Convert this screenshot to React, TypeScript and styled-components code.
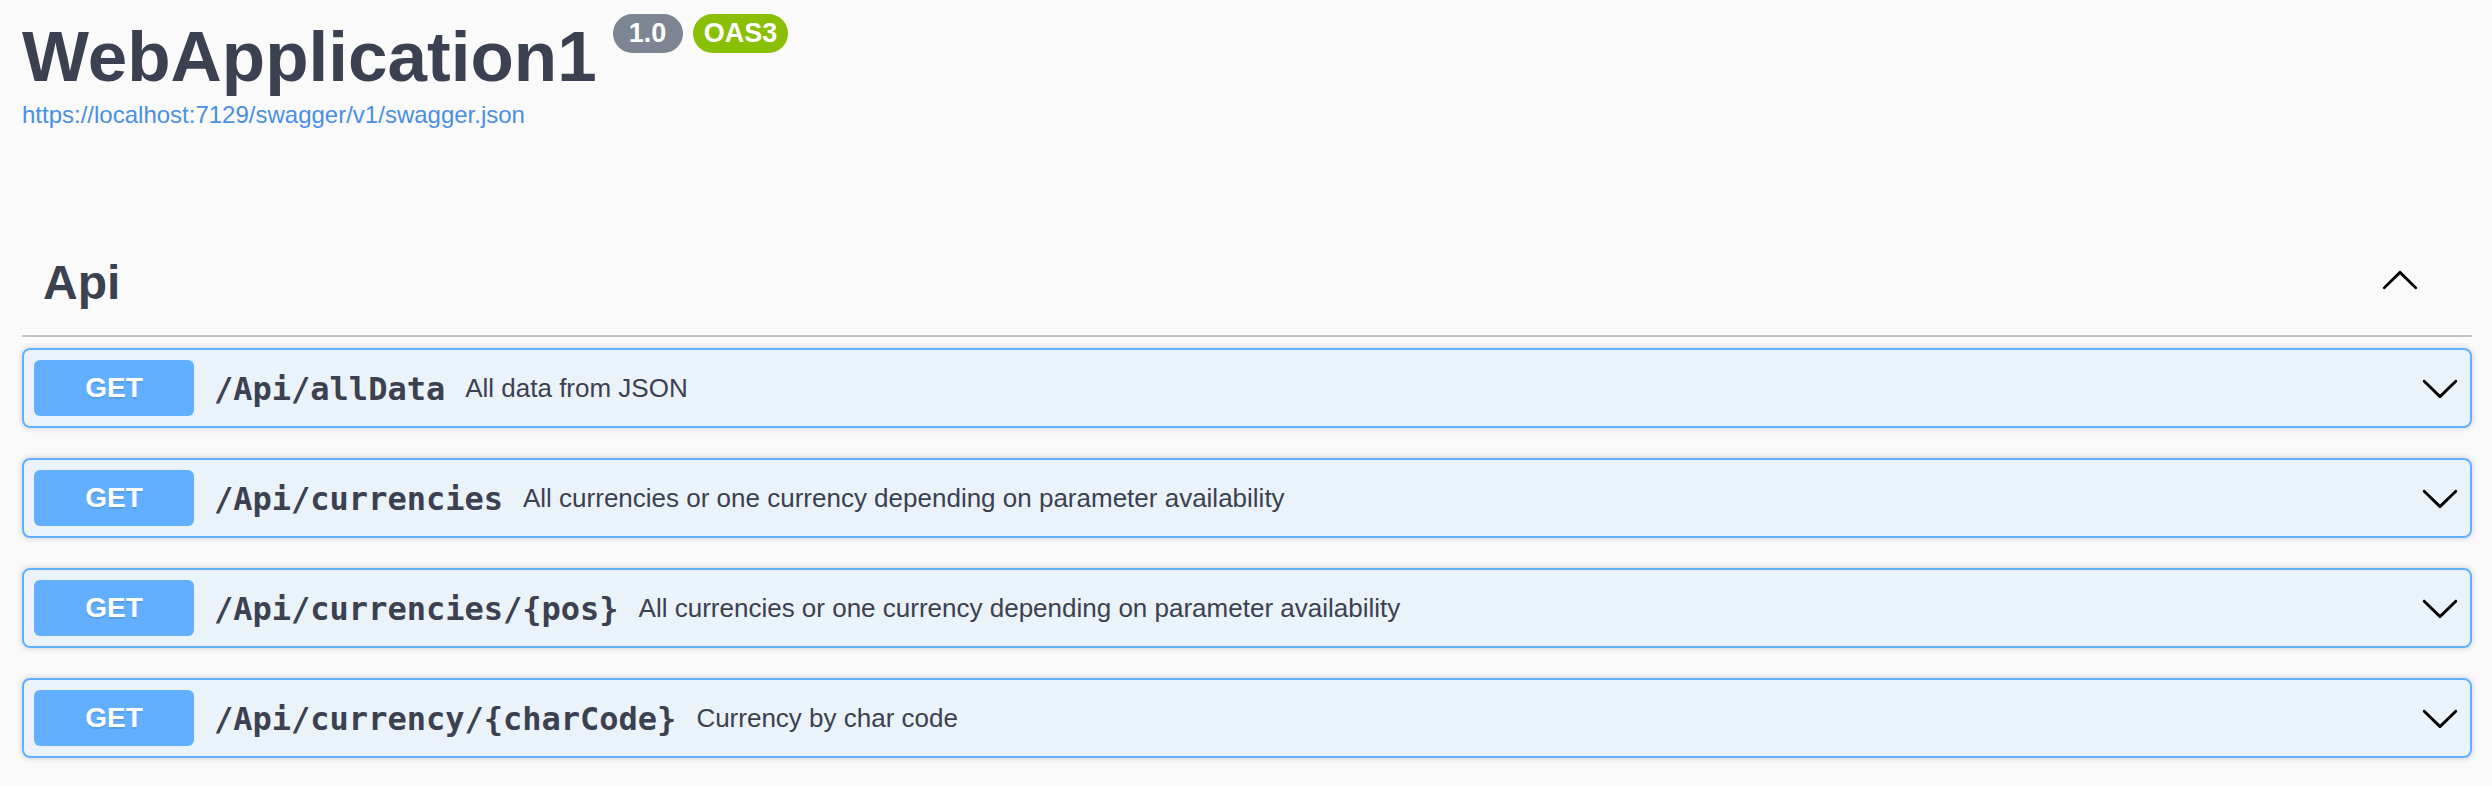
import React from "react";
import styled, { createGlobalStyle } from "styled-components";

const GlobalStyle = createGlobalStyle`
  html, body {
    margin: 0;
    padding: 0;
    background: #fafafa;
  }
  body {
    font-family: "Liberation Sans", Arial, Helvetica, sans-serif;
    color: #3b4151;
  }
  * { box-sizing: border-box; }
`;

const Wrapper = styled.div`
  padding: 0 20px 0 22px;
`;

const Info = styled.header`
  padding-top: 14px;
`;

const TitleRow = styled.div`
  display: flex;
  align-items: flex-start;
  gap: 10px;
`;

const Title = styled.h2`
  margin: 3px 6px 0 0;
  font-size: 71px;
  line-height: 80px;
  font-weight: 700;
  color: #3b4151;
`;

const Badge = styled.span<{ $bg: string }>`
  display: inline-block;
  height: 39px;
  min-width: 70px;
  padding: 0 11px;
  border-radius: 20px;
  background: ${(p) => p.$bg};
  color: #fff;
  font-size: 27px;
  font-weight: 700;
  line-height: 39px;
  text-align: center;
`;

const BaseUrl = styled.a`
  display: block;
  margin-top: 4px;
  font-size: 24px;
  line-height: 28px;
  color: #4990e2;
  text-decoration: none;
`;

const Section = styled.section`
  margin-top: 106px;
`;

const TagHeader = styled.div`
  display: flex;
  align-items: center;
  padding: 20px 40px 24px 21px;
  border-bottom: 2px solid rgba(59, 65, 81, 0.3);
`;

const TagName = styled.h3`
  flex: 1;
  margin: 0;
  font-size: 48px;
  line-height: 56px;
  font-weight: 700;
  color: #3b4151;
`;

const ExpandButton = styled.button`
  display: flex;
  padding: 0;
  margin: 0 12px 8px 0;
  border: none;
  background: none;
  cursor: pointer;
`;

const OpList = styled.div`
  margin-top: 11px;
`;

const OpBlock = styled.div`
  margin-bottom: 30px;
  border: 2px solid #61affe;
  border-radius: 8px;
  background: rgba(97, 175, 254, 0.1);
  box-shadow: 0 0 6px rgba(0, 0, 0, 0.19);
`;

const Summary = styled.div`
  display: flex;
  align-items: center;
  padding: 10px;
`;

const Method = styled.span`
  flex-shrink: 0;
  min-width: 160px;
  height: 56px;
  border-radius: 6px;
  background: #61affe;
  color: #fff;
  font-size: 28px;
  font-weight: 700;
  line-height: 56px;
  text-align: center;
  text-shadow: 0 2px 0 rgba(0, 0, 0, 0.1);
`;

const Path = styled.span`
  flex-shrink: 0;
  padding: 2px 20px 0 20px;
  font-family: "DejaVu Sans Mono", "Liberation Mono", monospace;
  font-size: 32px;
  line-height: 32px;
  font-weight: 700;
  color: #3b4151;
`;

const Description = styled.span`
  flex: 1;
  font-size: 26px;
  line-height: 30px;
  color: #3b4151;
`;

const Arrow = styled.svg`
  flex-shrink: 0;
  width: 40px;
  height: 40px;
`;

const ArrowDown = () => (
  <Arrow viewBox="0 0 20 20" aria-hidden="true">
    <path d="M17.418 6.109c.272-.268.709-.268.979 0s.271.701 0 .969l-7.908 7.83c-.27.268-.707.268-.979 0l-7.908-7.83c-.27-.268-.27-.701 0-.969.271-.268.709-.268.979 0L10 13.25l7.418-7.141z" />
  </Arrow>
);

const ArrowUp = () => (
  <Arrow viewBox="0 0 20 20" aria-hidden="true">
    <path d="M17.418 14.908c.272.268.709.268.979 0s.271-.701 0-.969l-7.908-7.83c-.27-.268-.707-.268-.979 0l-7.908 7.83c-.27.268-.27.701 0 .969.271.268.709.268.979 0L10 7.766l7.418 7.142z" />
  </Arrow>
);

const operations = [
  { path: "/Api/allData", description: "All data from JSON" },
  {
    path: "/Api/currencies",
    description: "All currencies or one currency depending on parameter availability",
  },
  {
    path: "/Api/currencies/{pos}",
    description: "All currencies or one currency depending on parameter availability",
  },
  { path: "/Api/currency/{charCode}", description: "Currency by char code" },
];

export default function App() {
  return (
    <>
      <GlobalStyle />
      <Wrapper>
        <Info>
          <TitleRow>
            <Title>WebApplication1</Title>
            <Badge $bg="#7d8492">1.0</Badge>
            <Badge $bg="#89bf04">OAS3</Badge>
          </TitleRow>
          <BaseUrl href="#">https://localhost:7129/swagger/v1/swagger.json</BaseUrl>
        </Info>
        <Section>
          <TagHeader>
            <TagName>Api</TagName>
            <ExpandButton aria-label="Collapse operation">
              <ArrowUp />
            </ExpandButton>
          </TagHeader>
          <OpList>
            {operations.map((op) => (
              <OpBlock key={op.path}>
                <Summary>
                  <Method>GET</Method>
                  <Path>{op.path}</Path>
                  <Description>{op.description}</Description>
                  <ArrowDown />
                </Summary>
              </OpBlock>
            ))}
          </OpList>
        </Section>
      </Wrapper>
    </>
  );
}
